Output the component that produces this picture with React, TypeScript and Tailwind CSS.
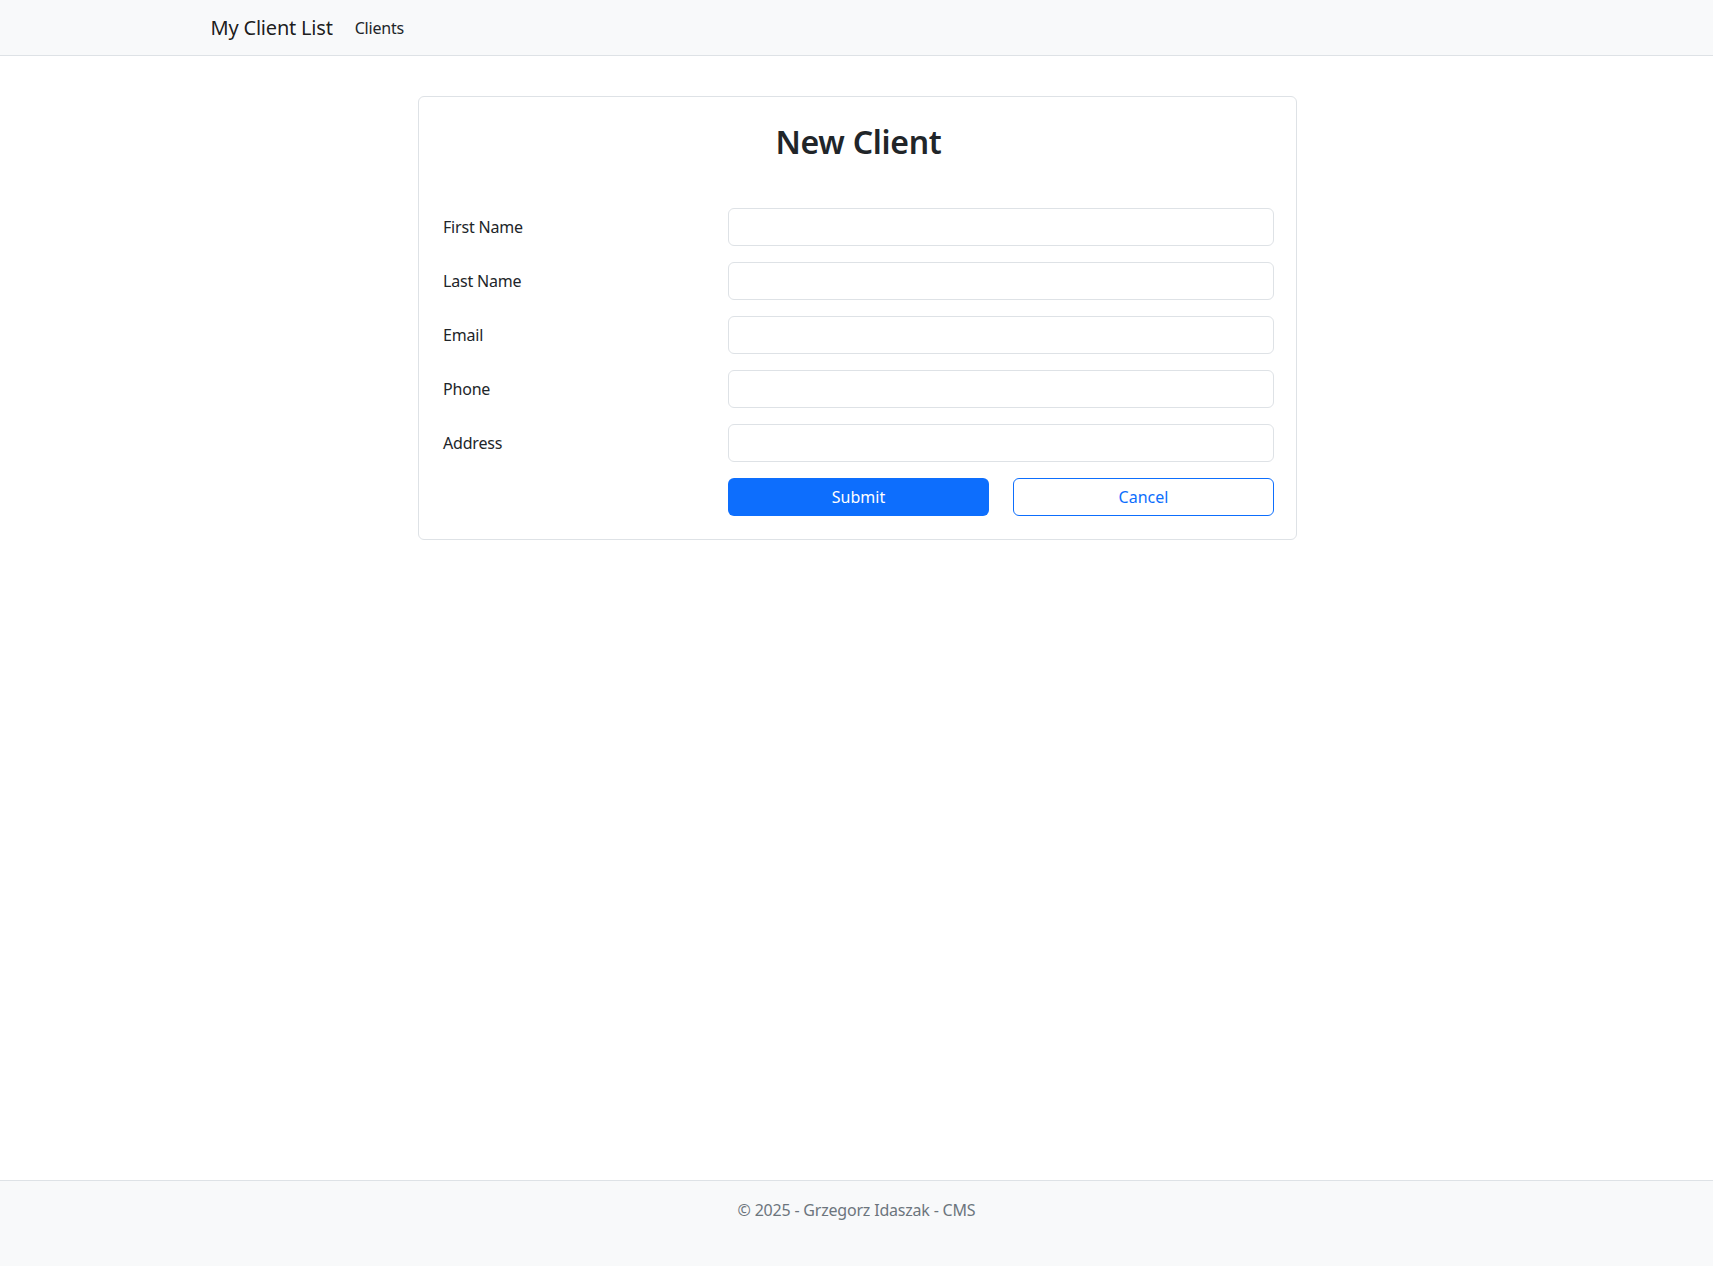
import React from "react";

const fields = ["First Name", "Last Name", "Email", "Phone", "Address"];

export default function App() {
  return (
    <div className="flex min-h-screen flex-col bg-white font-['Noto_Sans',sans-serif] text-[#212529]">
      {/* Navbar */}
      <header className="h-[56px] border-b border-[#dee2e6] bg-[#f8f9fa]">
        <nav className="mx-auto flex h-full w-[1320px] items-center px-3 pl-[14px]">
          <a className="mr-[14px] text-[20px] tracking-[-0.2px] text-black/90">My Client List</a>
          <a className="px-2 text-[16px] tracking-[-0.2px] text-[#212529]">Clients</a>
        </nav>
      </header>

      {/* Main */}
      <main className="flex-1 pt-[40px]">
        <div className="mx-auto w-[879px] translate-x-[1px] rounded-md border border-[#dee2e6] pb-[23px] pl-[24px] pr-[22px] pt-[26px]">
          <h2 className="mb-[47px] text-center text-[32px] font-semibold leading-[1.2] tracking-[-0.3px]">
            New Client
          </h2>

          <form className="flex flex-col gap-4">
            {fields.map((label) => (
              <div key={label} className="flex items-center gap-6">
                <label className="w-[261px] shrink-0 text-[16px] tracking-[-0.2px]">{label}</label>
                <input
                  type="text"
                  className="h-[38px] w-[546px] shrink-0 rounded-md border border-[#dee2e6] bg-white px-3 text-[16px] outline-none"
                />
              </div>
            ))}

            <div className="flex gap-6 pl-[285px]">
              <button
                type="button"
                className="h-[38px] w-[261px] shrink-0 rounded-md bg-[#0d6efd] text-[16px] text-white"
              >
                Submit
              </button>
              <button
                type="button"
                className="h-[38px] w-[261px] shrink-0 rounded-md border border-[#0d6efd] bg-white text-[16px] text-[#0d6efd]"
              >
                Cancel
              </button>
            </div>
          </form>
        </div>
      </main>

      {/* Footer */}
      <footer className="h-[86px] border-t border-[#dee2e6] bg-[#f8f9fa] pt-[17px] text-center text-[16px] tracking-[-0.2px] text-[#6c757d]">
        © 2025 - Grzegorz Idaszak - CMS
      </footer>
    </div>
  );
}
